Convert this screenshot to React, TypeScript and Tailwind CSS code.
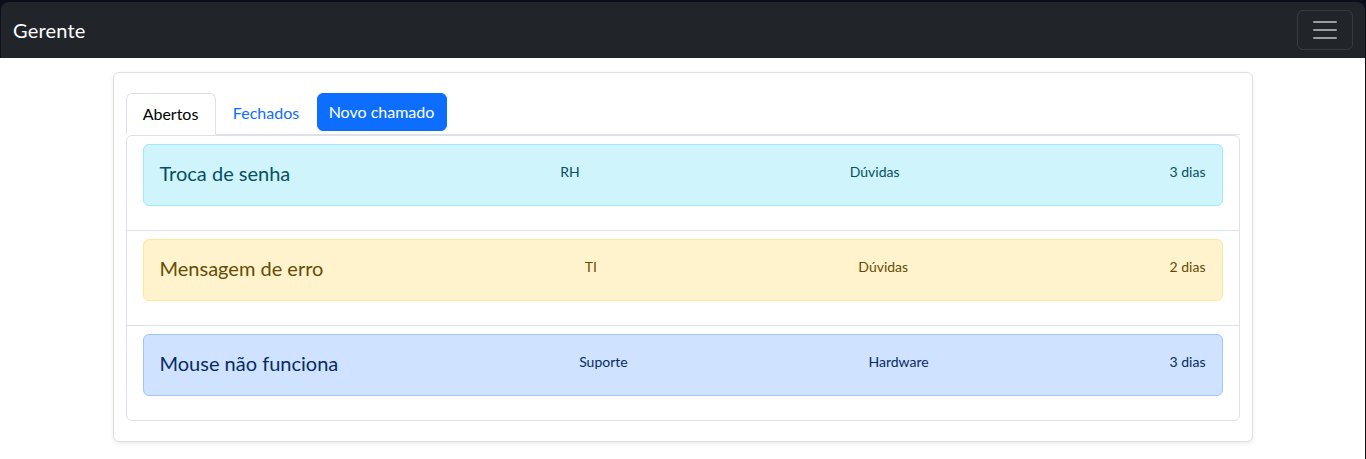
const chamados = [
  {
    titulo: "Troca de senha",
    setor: "RH",
    categoria: "Dúvidas",
    prazo: "3 dias",
    cor: "border-[#9eeaf9] bg-[#cff4fc] text-[#055160]",
  },
  {
    titulo: "Mensagem de erro",
    setor: "TI",
    categoria: "Dúvidas",
    prazo: "2 dias",
    cor: "border-[#ffe69c] bg-[#fff3cd] text-[#664d03]",
  },
  {
    titulo: "Mouse não funciona",
    setor: "Suporte",
    categoria: "Hardware",
    prazo: "3 dias",
    cor: "border-[#9ec5fe] bg-[#cfe2ff] text-[#052c65]",
  },
];

function Navbar() {
  return (
    <nav className="mx-[1px] mt-[2px] flex h-14 items-center justify-between rounded-t-[8px] bg-[#212529] px-3">
      <span className="text-xl leading-[30px] tracking-[0.2px] text-white">
        Gerente
      </span>
      <button className="flex h-10 w-14 items-center justify-center rounded-md border border-[rgba(255,255,255,0.1)]">
        <svg width="30" height="30" viewBox="0 0 30 30">
          <path
            d="M4 7h22M4 15h22M4 23h22"
            stroke="rgba(255,255,255,0.55)"
            strokeWidth="2"
            strokeLinecap="round"
          />
        </svg>
      </button>
    </nav>
  );
}

export default function App() {
  return (
    <div className="flex min-h-screen flex-col bg-[#0c0e1b] font-['Lato',sans-serif] text-base text-[#212529]">
      <Navbar />

      <main className="mr-[1px] flex-1 bg-white pt-[14px]">
        <div className="mx-auto w-[1140px] rounded-md border border-[#dfdfdf] bg-white px-3 py-5 shadow-[0_2px_4px_rgba(0,0,0,0.075)]">
          {/* abas */}
          <div className="flex items-start border-b border-[#dee2e6]">
            <div className="-mb-px w-[90px] rounded-t-md border border-[#dee2e6] border-b-white bg-white py-2 text-center leading-6 text-black">
              Abertos
            </div>
            <div className="w-[101px] py-2 text-center leading-6 text-[#0d6efd]">
              Fechados
            </div>
            <button className="w-[130px] rounded-md border border-[#0d6efd] bg-[#0d6efd] py-1.5 text-center leading-6 text-white">
              Novo chamado
            </button>
          </div>

          <div className="rounded-md border border-[#dee2e6]">
            {chamados.map((c, i) => (
              <div
                key={c.titulo}
                className={
                  i > 0 ? "border-t border-[#dee2e6] px-4 py-2" : "px-4 py-2"
                }
              >
                <div
                  className={`mb-4 flex items-start justify-between rounded-md border p-4 ${c.cor}`}
                >
                  <h5 className="mb-1 text-xl leading-6">{c.titulo}</h5>
                  <small className="text-sm leading-[21px]">{c.setor}</small>
                  <small className="text-sm leading-[21px]">{c.categoria}</small>
                  <small className="text-sm leading-[21px]">{c.prazo}</small>
                </div>
              </div>
            ))}
          </div>
        </div>
      </main>
    </div>
  );
}
